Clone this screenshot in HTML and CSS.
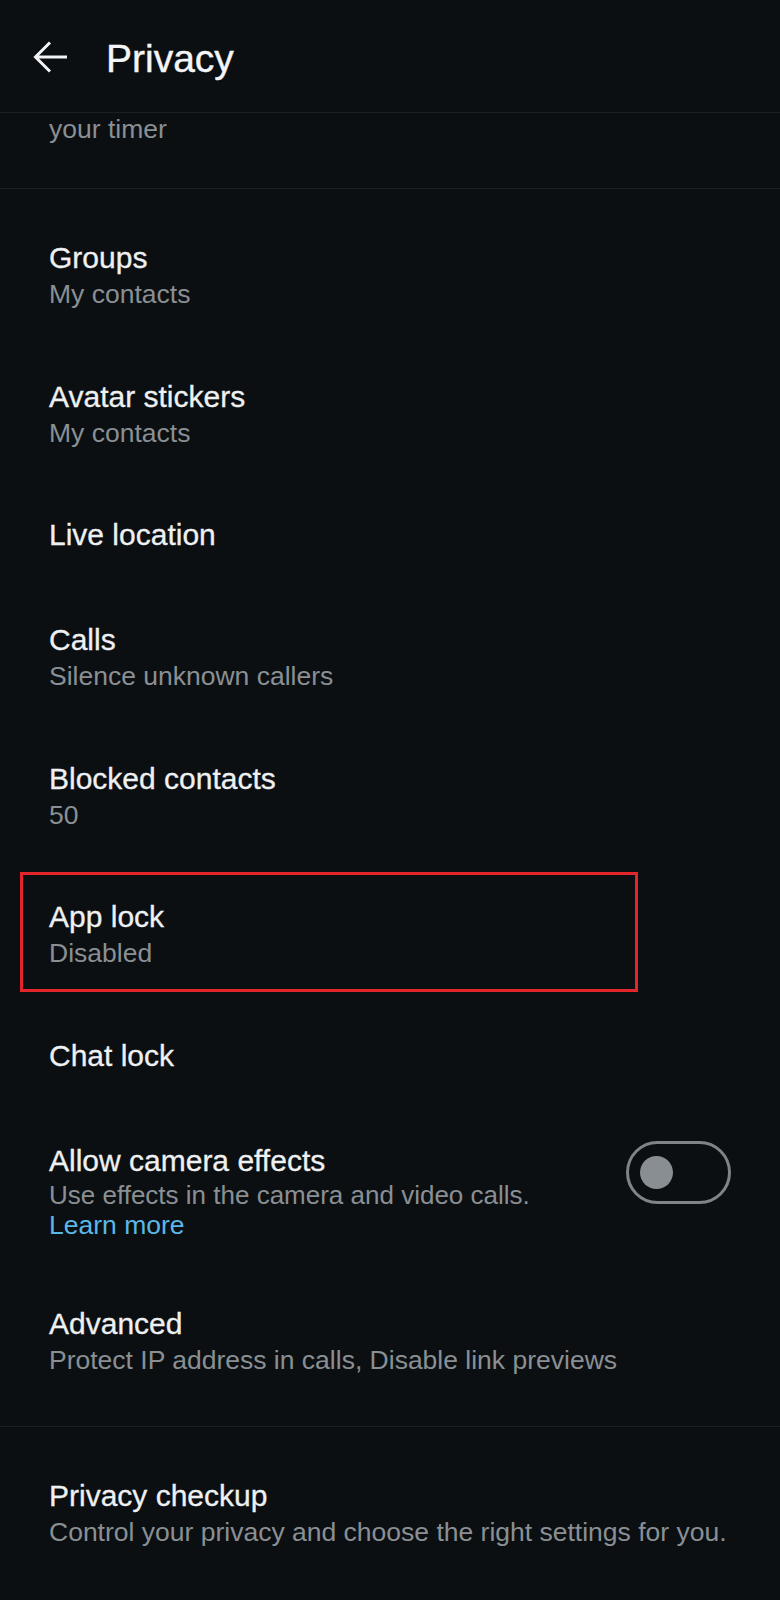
FILE: index.html
```html
<!DOCTYPE html>
<html lang="en">
<head>
<meta charset="utf-8">
<title>Privacy</title>
<link rel="stylesheet" href="styles.css">
</head>
<body>
<header class="appbar">
  <svg class="back" width="36" height="36" viewBox="0 0 36 36" aria-hidden="true">
    <path d="M34 18H3M17 3.5L2.5 18L17 32.5" fill="none" stroke="#f1f3f4" stroke-width="3" stroke-linecap="butt" stroke-linejoin="miter"/>
  </svg>
  <h1 class="appbar-title">Privacy</h1>
</header>
<main class="content">
  <div class="partial"><p class="sub partial-text">your timer</p></div>
  <section class="group">
    <div class="item"><p class="title">Groups</p><p class="sub">My contacts</p></div>
    <div class="item"><p class="title">Avatar stickers</p><p class="sub">My contacts</p></div>
    <div class="item"><p class="title">Live location</p></div>
    <div class="item"><p class="title">Calls</p><p class="sub">Silence unknown callers</p></div>
    <div class="item"><p class="title">Blocked contacts</p><p class="sub">50</p></div>
    <div class="item item-marked"><p class="title">App lock</p><p class="sub">Disabled</p><span class="mark"></span></div>
    <div class="item"><p class="title">Chat lock</p></div>
    <div class="item item-toggle">
      <div class="item-text">
        <p class="title">Allow camera effects</p>
        <p class="sub sub-wrap">Use effects in the camera and video calls.</p>
        <a class="link">Learn more</a>
      </div>
      <span class="toggle"><span class="knob"></span></span>
    </div>
    <div class="item"><p class="title">Advanced</p><p class="sub">Protect IP address in calls, Disable link previews</p></div>
  </section>
  <section class="group">
    <div class="item"><p class="title">Privacy checkup</p><p class="sub">Control your privacy and choose the right settings for you.</p></div>
  </section>
</main>
</body>
</html>
```
FILE: styles.css
```css
html, body {
  margin: 0;
  padding: 0;
  background: #0b0f12;
}
body {
  width: 780px;
  min-height: 1600px;
  font-family: "Liberation Sans", Arial, sans-serif;
  color: #eef0f1;
}
p, h1 { margin: 0; }

.appbar {
  height: 113px;
  box-sizing: border-box;
  border-bottom: 1px solid #1b1f23;
  display: flex;
  align-items: center;
  padding: 5px 0 0 33px;
}
.back {
  display: block;
  margin-top: -3px;
}
.appbar-title {
  margin-left: 37px;
  font-size: 39px;
  line-height: 46px;
  font-weight: normal;
  color: #f4f5f6;
  -webkit-text-stroke: 0.4px #f4f5f6;
}

.partial {
  height: 76px;
  box-sizing: border-box;
  border-bottom: 1px solid #1b1f23;
  padding-left: 49px;
  overflow: hidden;
}
.partial-text {
  line-height: 20px;
}

.group {
  padding: 16px 0;
  border-bottom: 1px solid #1b1f23;
}
.group:last-child { border-bottom: none; }

.item {
  position: relative;
  padding: 32px 49px 32px 49px;
}
.title {
  font-size: 30px;
  line-height: 41px;
  color: #eef0f1;
  -webkit-text-stroke: 0.3px #eef0f1;
}
.sub {
  font-size: 26.5px;
  line-height: 33.5px;
  color: #8a8f94;
}

.item-toggle {
  display: flex;
  align-items: flex-start;
  justify-content: space-between;
  padding-bottom: 34px;
}
.sub-wrap {
  font-size: 26px;
  line-height: 28px;
  margin-top: 0.5px;
}
.link {
  display: block;
  margin-top: 4px;
  font-size: 26.5px;
  line-height: 24px;
  color: #5bb8e6;
  text-decoration: none;
}
.toggle {
  flex: none;
  width: 105px;
  height: 63px;
  margin-top: 1.5px;
  box-sizing: border-box;
  border: 3px solid #7f8489;
  border-radius: 32px;
  display: flex;
  align-items: center;
  padding-left: 11px;
}
.knob {
  width: 33px;
  height: 33px;
  border-radius: 50%;
  background: #898e93;
}

.mark {
  position: absolute;
  top: 8px;
  left: 20px;
  width: 618px;
  height: 120px;
  box-sizing: border-box;
  border: 3px solid #e2262c;
}
```
